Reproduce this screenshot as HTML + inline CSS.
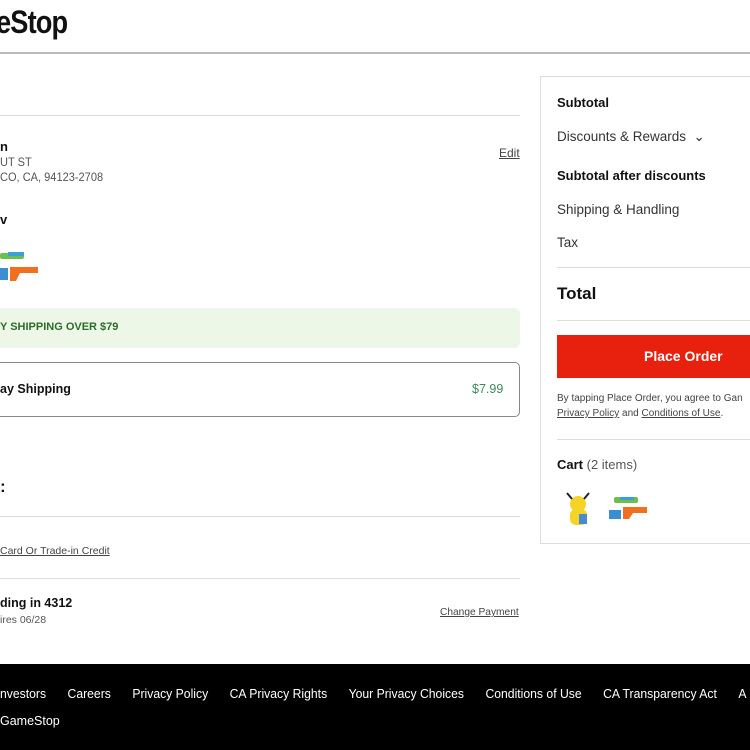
<!DOCTYPE html>
<html><head><style>
*{box-sizing:border-box;margin:0;padding:0}
body{width:750px;height:750px;overflow:hidden;background:#fff;font-family:"Liberation Sans",sans-serif;color:#111;position:relative}
.a{position:absolute;white-space:nowrap}
.hl{position:absolute;height:1px;background:#ddd}
u{text-decoration:underline}
</style></head><body>
<div class="a" style="left:-4px;top:4px;font-size:32px;font-weight:bold;letter-spacing:-1px;transform:scaleX(0.85);transform-origin:left">eStop</div>
<div class="hl" style="left:0;top:52px;width:750px;height:2px;background:#bbb"></div>
<div class="hl" style="left:0;top:115px;width:520px"></div>
<div class="a" style="left:0;top:139px;font-size:13px;font-weight:bold">n</div>
<div class="a" style="left:0;top:155px;font-size:12px;color:#555;transform:scaleX(0.92);transform-origin:left">UT ST</div>
<div class="a" style="left:0;top:170px;font-size:12px;color:#555;transform:scaleX(0.92);transform-origin:left">CO, CA, 94123-2708</div>
<div class="a" style="left:499px;top:146px;font-size:12px;color:#444"><u>Edit</u></div>
<div class="a" style="left:0;top:212px;font-size:13px;font-weight:bold">v</div>
<svg class="a" style="left:0;top:250px" width="42" height="35"><rect x="0" y="3" width="24" height="6" rx="2" fill="#6cc04a"/><rect x="8" y="2" width="16" height="4" fill="#3aa0d8"/><rect x="0" y="18" width="8" height="12" fill="#3a8fd0"/><path d="M10 17 h28 v6 h-18 l-4 8 h-6z" fill="#f07020"/></svg>
<div class="a" style="left:0;top:308px;width:520px;height:40px;background:#ecf7e8;border-radius:0 6px 6px 0"></div>
<div class="a" style="left:0;top:321px;font-size:11px;font-weight:bold;color:#2d6b2a">Y SHIPPING OVER $79</div>
<div class="a" style="left:-10px;top:362px;width:530px;height:55px;border:1px solid #888;border-radius:5px"></div>
<div class="a" style="left:0;top:382px;font-size:12.5px;font-weight:bold">ay Shipping</div>
<div class="a" style="left:472px;top:382px;font-size:12.5px;color:#3a8a5a">$7.99</div>
<div class="a" style="left:0;top:477px;font-size:17px;font-weight:bold">:</div>
<div class="hl" style="left:0;top:516px;width:520px"></div>
<div class="a" style="left:0;top:545px;font-size:10.5px;color:#444"><u>Card Or Trade-in Credit</u></div>
<div class="hl" style="left:0;top:578px;width:520px"></div>
<div class="a" style="left:0;top:596px;font-size:12.5px;font-weight:bold">ding in 4312</div>
<div class="a" style="left:0;top:614px;font-size:10.5px;color:#555">ires 06/28</div>
<div class="a" style="left:440px;top:606px;font-size:10.5px;color:#444;transform:scaleX(0.97);transform-origin:left"><u>Change Payment</u></div>
<div class="a" style="left:540px;top:76px;width:230px;height:468px;border:1px solid #ddd"></div>
<div class="a" style="left:557px;top:95px;font-size:13px;font-weight:bold">Subtotal</div>
<div class="a" style="left:557px;top:129px;font-size:13.5px;color:#333">Discounts &amp; Rewards &nbsp;⌄</div>
<div class="a" style="left:557px;top:168px;font-size:13px;font-weight:bold">Subtotal after discounts</div>
<div class="a" style="left:557px;top:202px;font-size:13.5px;color:#333">Shipping &amp; Handling</div>
<div class="a" style="left:557px;top:235px;font-size:13.5px;color:#333">Tax</div>
<div class="hl" style="left:557px;top:267px;width:193px"></div>
<div class="a" style="left:557px;top:284px;font-size:17px;font-weight:bold">Total</div>
<div class="hl" style="left:557px;top:320px;width:193px"></div>
<div class="a" style="left:557px;top:335px;width:200px;height:43px;background:#e8200e"></div>
<div class="a" style="left:644px;top:348px;font-size:14px;font-weight:bold;color:#fff">Place Order</div>
<div class="a" style="left:557px;top:393px;font-size:10px;color:#444">By tapping Place Order, you agree to Gan</div>
<div class="a" style="left:557px;top:408px;font-size:10px;color:#444"><u>Privacy Policy</u> and <u>Conditions of Use</u>.</div>
<div class="hl" style="left:557px;top:439px;width:193px"></div>
<div class="a" style="left:557px;top:457px;font-size:13px;color:#555"><b style="color:#111">Cart</b> (2 items)</div>
<svg class="a" style="left:563px;top:491px" width="30" height="37"><circle cx="15" cy="13" r="8" fill="#f5d327"/><rect x="7" y="18" width="17" height="16" rx="6" fill="#f5d327"/><rect x="16" y="23" width="8" height="10" fill="#4a8ad0"/><path d="M4 2 l5 6 M26 2 l-5 6" stroke="#222" stroke-width="2"/></svg>
<svg class="a" style="left:608px;top:496px" width="40" height="27"><rect x="6" y="1" width="24" height="6" rx="2" fill="#6cc04a"/><rect x="12" y="1" width="14" height="3" fill="#3aa0d8"/><rect x="1" y="14" width="12" height="9" fill="#3a8fd0"/><path d="M15 11 h24 v6 h-14 l-4 6 h-6z" fill="#f07020"/></svg>
<div class="a" style="left:0;top:664px;width:750px;height:86px;background:#000"></div>
<div class="a" style="left:0;top:687px;font-size:12.5px;color:#fff;transform:scaleX(0.975);transform-origin:left">nvestors<span style="margin-left:22px">Careers</span><span style="margin-left:22px">Privacy Policy</span><span style="margin-left:22px">CA Privacy Rights</span><span style="margin-left:22px">Your Privacy Choices</span><span style="margin-left:22px">Conditions of Use</span><span style="margin-left:22px">CA Transparency Act</span><span style="margin-left:22px">A</span></div>
<div class="a" style="left:0;top:714px;font-size:12.5px;color:#fff">GameStop</div>
</body></html>
